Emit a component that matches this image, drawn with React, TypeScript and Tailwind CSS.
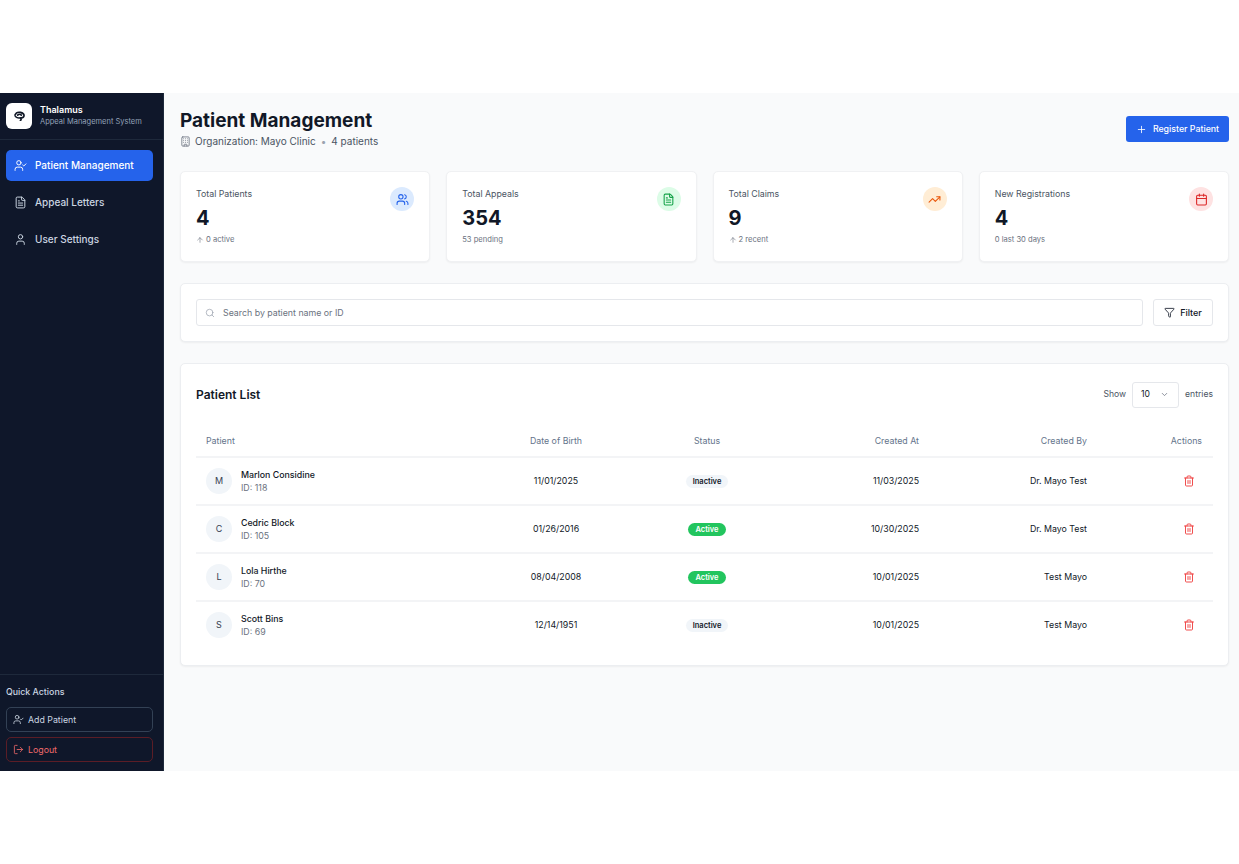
import React from "react";
import {
  ArrowUp,
  Building,
  Calendar,
  ChevronDown,
  FileText,
  Filter,
  LogOut,
  Plus,
  Search,
  Trash2,
  TrendingUp,
  User,
  UserCheck,
  Users,
} from "lucide-react";

const stats = [
  { title: "Total Patients", value: "4", note: "0 active", arrow: true, Icon: Users, bg: "bg-[#dbeafe]", fg: "text-[#2563eb]" },
  { title: "Total Appeals", value: "354", note: "53 pending", arrow: false, Icon: FileText, bg: "bg-[#dcfce7]", fg: "text-[#16a34a]" },
  { title: "Total Claims", value: "9", note: "2 recent", arrow: true, Icon: TrendingUp, bg: "bg-[#ffedd5]", fg: "text-[#ea580c]" },
  { title: "New Registrations", value: "4", note: "0 last 30 days", arrow: false, Icon: Calendar, bg: "bg-[#fee2e2]", fg: "text-[#dc2626]" },
];

const patients = [
  { name: "Marlon Considine", id: 118, dob: "11/01/2025", active: false, created: "11/03/2025", by: "Dr. Mayo Test" },
  { name: "Cedric Block", id: 105, dob: "01/26/2016", active: true, created: "10/30/2025", by: "Dr. Mayo Test" },
  { name: "Lola Hirthe", id: 70, dob: "08/04/2008", active: true, created: "10/01/2025", by: "Test Mayo" },
  { name: "Scott Bins", id: 69, dob: "12/14/1951", active: false, created: "10/01/2025", by: "Test Mayo" },
];

const nav = [
  { label: "Patient Management", Icon: UserCheck, active: true },
  { label: "Appeal Letters", Icon: FileText, active: false },
  { label: "User Settings", Icon: User, active: false },
];

const Logo = () => (
  <svg width="11" height="10" viewBox="0 0 24 22" fill="none" stroke="#111827" strokeWidth="3.6" strokeLinecap="round">
    <path d="M2 9C4 4 9 2 14 3c5 1 8 4 8 7 0 3-3 5-6 5" />
    <path d="M3 12c3 3 7 4 11 3 2 2 2 4 0 6" />
    <path d="M8 9c2-2 6-2 8 0" />
  </svg>
);

const App = () => {
  return (
    <div className="pt-[93px] pb-[93px] font-['Inter',sans-serif] bg-white">
      <div className="flex h-[678px] bg-[#f9fafb]">
        <aside className="w-[164px] shrink-0 bg-[#0f172a] border-r border-[#1e293b] flex flex-col">
          <div className="h-[47px] flex items-center gap-[8px] px-[6px] border-b border-[#1e293b]">
            <div className="w-[26px] h-[26px] rounded-[6px] bg-white flex items-center justify-center">
              <Logo />
            </div>
            <div className="min-w-0 pb-[2px]">
              <div className="text-[9px] leading-[12px] font-semibold text-white">Thalamus</div>
              <div className="text-[7.5px] leading-[11px] text-[#94a3b8] whitespace-nowrap">Appeal Management System</div>
            </div>
          </div>
          <nav className="pl-[6px] pr-[10px] pt-[10px] flex flex-col gap-[6px]">
            {nav.map(({ label, Icon, active }) => (
              <div
                key={label}
                className={`h-[31px] rounded-[5px] flex items-center gap-[8px] px-[8px] text-[10px] font-medium ${
                  active ? "bg-[#2563eb] text-white" : "text-[#cbd5e1]"
                }`}
              >
                <Icon size={13} strokeWidth={1.8} />
                <span>{label}</span>
              </div>
            ))}
          </nav>
          <div className="mt-auto border-t border-[#1e293b] pl-[6px] pr-[10px] pt-[11px] pb-[9px]">
            <div className="text-[8.8px] leading-[12px] font-medium text-[#cbd5e1] mb-[9px]">Quick Actions</div>
            <div className="h-[25px] rounded-[5px] border border-[#334155] flex items-center gap-[4px] px-[6px] text-[8.8px] text-[#cbd5e1]">
              <UserCheck size={11} strokeWidth={1.8} />
              Add Patient
            </div>
            <div className="h-[25px] mt-[5px] rounded-[5px] border border-[#5b1d26] flex items-center gap-[4px] px-[6px] text-[8.8px] text-[#ef6a6a]">
              <LogOut size={11} strokeWidth={1.8} />
              Logout
            </div>
          </div>
        </aside>

        <main className="flex-1 min-w-0 pl-[16px] pr-[10px] pt-[16px]">
          <header className="flex items-start justify-between h-[62px]">
            <div>
              <h1 className="text-[19px] leading-[24px] font-bold text-[#111827]">Patient Management</h1>
              <div className="flex items-center text-[10px] leading-[16px] text-[#4b5563]">
                <Building size={11} strokeWidth={1.8} className="text-[#6b7280] mr-[4px]" />
                <span>Organization: Mayo Clinic</span>
                <span className="mx-[5px] text-[#9ca3af]">•</span>
                <span>4 patients</span>
              </div>
            </div>
            <button className="mt-[7px] h-[26px] w-[103px] rounded-[3px] bg-[#2563eb] text-white flex items-center justify-center gap-[6px] text-[8.8px] font-medium">
              <Plus size={11} strokeWidth={1.8} />
              Register Patient
            </button>
          </header>

          <section className="grid grid-cols-4 gap-[16px]">
            {stats.map(({ title, value, note, arrow, Icon, bg, fg }) => (
              <div key={title} className="h-[91px] rounded-[5px] bg-white border border-[#f0f1f3] shadow-xs px-[15px] pt-[15px] flex justify-between">
                <div>
                  <div className="text-[8.8px] leading-[13px] text-[#4b5563]">{title}</div>
                  <div className="text-[20px] leading-[24px] mt-[6px] font-bold text-[#111827]">{value}</div>
                  <div className="flex items-center gap-[2px] mt-[4px] text-[7.6px] leading-[11px] text-[#6b7280]">
                    {arrow && <ArrowUp size={8} strokeWidth={1.8} />}
                    {note}
                  </div>
                </div>
                <div className={`w-[24px] h-[24px] rounded-full flex items-center justify-center ${bg} ${fg}`}>
                  <Icon size={13} strokeWidth={2} />
                </div>
              </div>
            ))}
          </section>

          <section className="mt-[21px] h-[59px] rounded-[5px] bg-white border border-[#eceef1] shadow-xs px-[15px] flex items-center gap-[10px]">
            <div className="flex-1 h-[27px] rounded-[3px] border border-[#e5e7eb] flex items-center gap-[8px] px-[8px] text-[8.8px] text-[#6b7280]">
              <Search size={10} strokeWidth={1.8} className="text-[#9ca3af]" />
              Search by patient name or ID
            </div>
            <div className="w-[60px] h-[27px] rounded-[3px] border border-[#e5e7eb] flex items-center justify-center gap-[5px] text-[9px] font-medium text-[#111827]">
              <Filter size={11} strokeWidth={1.8} />
              Filter
            </div>
          </section>

          <section className="mt-[21px] h-[303px] rounded-[5px] bg-white border border-[#eceef1] shadow-xs px-[15px] pt-[17px]">
            <div className="flex items-center justify-between h-[27px]">
              <h2 className="text-[12px] font-semibold text-[#111827]">Patient List</h2>
              <div className="flex items-center gap-[6px] text-[8.6px] text-[#4b5563]">
                Show
                <div className="w-[47px] h-[26px] rounded-[3px] border border-[#e5e7eb] flex items-center justify-between pl-[8px] pr-[9px] text-[#111827]">
                  10
                  <ChevronDown size={9} className="text-[#6b7280]" />
                </div>
                entries
              </div>
            </div>
            <table className="mt-[17px] w-full table-fixed text-[8.8px]">
              <colgroup>
                <col className="w-[280px]" />
                <col className="w-[160px]" />
                <col className="w-[142px]" />
                <col className="w-[151px]" />
                <col className="w-[168px]" />
                <col className="w-[116px]" />
              </colgroup>
              <thead>
                <tr className="h-[32px] border-b-2 border-[#f3f4f6] text-[#64748b]">
                  <th className="font-normal text-left pl-[10px]">Patient</th>
                  <th className="font-normal text-center">Date of Birth</th>
                  <th className="font-normal text-center">Status</th>
                  <th className="font-normal text-right pr-[10px]">Created At</th>
                  <th className="font-normal text-right pr-[10px]">Created By</th>
                  <th className="font-normal text-right pr-[11px]">Actions</th>
                </tr>
              </thead>
              <tbody>
                {patients.map((p, i) => (
                  <tr key={p.id} className={`h-[48px] text-[#111827] border-b-2 ${i < patients.length - 1 ? "border-[#f3f4f6]" : "border-transparent"}`}>
                    <td className="pl-[10px]">
                      <div className="flex items-center gap-[9px]">
                        <div className="w-[26px] h-[26px] rounded-full bg-[#f1f5f9] flex items-center justify-center text-[9px] text-[#374151]">
                          {p.name[0]}
                        </div>
                        <div>
                          <div className="leading-[13px] font-medium">{p.name}</div>
                          <div className="leading-[13px] text-[#6b7280]">ID: {p.id}</div>
                        </div>
                      </div>
                    </td>
                    <td className="text-center">{p.dob}</td>
                    <td className="text-center">
                      <span
                        className={`inline-block rounded-full px-[7px] text-[7.5px] leading-[13px] font-semibold ${
                          p.active ? "bg-[#22c55e] text-white" : "bg-[#f1f5f9] text-[#111827]"
                        }`}
                      >
                        {p.active ? "Active" : "Inactive"}
                      </span>
                    </td>
                    <td className="text-right pr-[10px]">{p.created}</td>
                    <td className="text-right pr-[10px]">{p.by}</td>
                    <td className="pr-[18px]">
                      <div className="flex justify-end">
                        <Trash2 size={12} strokeWidth={1.9} className="text-[#ef4444]" />
                      </div>
                    </td>
                  </tr>
                ))}
              </tbody>
            </table>
          </section>
        </main>
      </div>
    </div>
  );
};

export default App;
